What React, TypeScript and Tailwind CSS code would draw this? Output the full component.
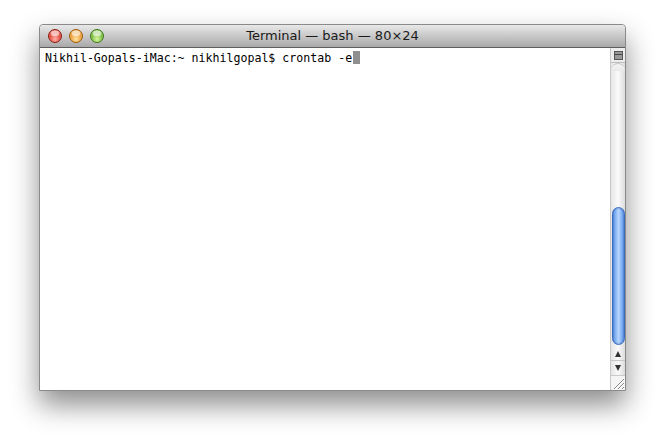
import React from "react";

function Light({ from, to, ring }: { from: string; to: string; ring: string }) {
  return (
    <div
      className={`h-[14px] w-[14px] rounded-full border ${ring} ${from} ${to} bg-radial-[at_50%_75%] shadow-[inset_0_1px_1px_rgba(255,255,255,0.6)]`}
    >
      <div className="mx-auto mt-[1px] h-[5px] w-[8px] rounded-full bg-white/60" />
    </div>
  );
}

function ScrollBar() {
  return (
    <div className="flex w-[15px] flex-col border-l border-[#c8c8c8] bg-gradient-to-r from-[#e6e6e6] via-[#fafafa] to-[#dcdcdc]">
      {/* split handle */}
      <div className="flex h-[15px] items-center justify-center border-b border-[#bdbdbd] bg-[#ededed]">
        <div className="h-[9px] w-[9px] border border-[#555] bg-[#999]">
          <div className="mt-[2px] h-[1px] bg-[#444]" />
        </div>
      </div>
      <div className="h-[8px] rounded-t-full border-t border-[#c4c4c4] bg-gradient-to-b from-[#f4f4f4] to-[#e8e8e8]" />
      <div className="flex-1" />
      {/* thumb */}
      <div className="mx-auto h-[138px] w-[13px] rounded-full border border-[#3a6cbf] bg-gradient-to-r from-[#5d95e8] via-[#b6d6ff] to-[#5d95e8] shadow-[inset_0_0_2px_rgba(0,40,120,0.5)]" />
      <div className="mt-[2px] flex h-[14px] items-center justify-center border-b border-[#c8c8c8]">
        <div className="h-0 w-0 border-x-[3.5px] border-b-[6px] border-x-transparent border-b-[#333]" />
      </div>
      <div className="flex h-[14px] items-center justify-center">
        <div className="h-0 w-0 border-x-[3.5px] border-t-[6px] border-x-transparent border-t-[#333]" />
      </div>
      <div className="h-[15px] border-t border-[#c8c8c8] bg-[#f4f4f4]">
        <svg width="14" height="14" viewBox="0 0 14 14">
          <path d="M3 13L13 3M7 13L13 7M11 13L13 11" stroke="#888" strokeWidth="1" />
          <path d="M4 13L13 4M8 13L13 8" stroke="#fff" strokeWidth="1" />
        </svg>
      </div>
    </div>
  );
}

export default function App() {
  return (
    <div className="h-[446px] w-[665px] bg-white pl-[39px] pt-[24px]">
      <div className="flex h-[367px] w-[587px] flex-col rounded-t-[4px] border border-[#8a8a8a] bg-white shadow-[0_14px_28px_rgba(0,0,0,0.45)]">
        {/* title bar */}
        <div className="relative flex h-[23px] items-center justify-center rounded-t-[4px] border-b border-[#5e5e5e] bg-gradient-to-b from-[#e8e8e8] to-[#a9a9a9]">
          <div className="absolute left-[8px] top-[4px] flex gap-[7px]">
            <Light from="from-[#ffb0a8]" to="to-[#d20f00]" ring="border-[#8b1a10]" />
            <Light from="from-[#ffe2a0]" to="to-[#e07a00]" ring="border-[#9c5a08]" />
            <Light from="from-[#d8f5a0]" to="to-[#48a014]" ring="border-[#3b7a10]" />
          </div>
          <span className="font-['DejaVu_Sans',sans-serif] text-[13px] text-[#1a1a1a]">
            Terminal — bash — 80×24
          </span>
        </div>
        {/* content */}
        <div className="flex flex-1">
          <div className="flex-1 px-[5px] pt-[1px] font-['DejaVu_Sans_Mono',monospace] text-[11.6px] leading-[15px] text-black">
            Nikhil-Gopals-iMac:~ nikhilgopal$ crontab -e
            <span className="ml-[1px] inline-block h-[13px] w-[7px] translate-y-[2px] bg-[#8f8f8f]" />
          </div>
          <ScrollBar />
        </div>
      </div>
    </div>
  );
}
